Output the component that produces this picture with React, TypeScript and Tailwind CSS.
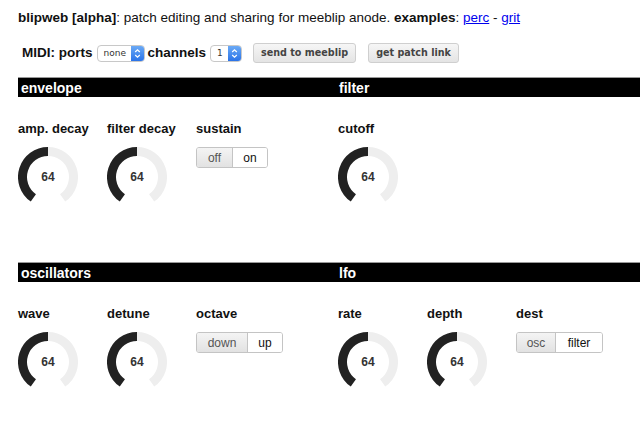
import React from "react";

function Knob({ value }: { value: number }) {
    return (
        <div className="relative w-[60px] h-[60px]">
            <svg width="60" height="60" viewBox="0 0 60 60" className="absolute inset-0">
                <path d="M30 4.5 A25.5 25.5 0 0 1 44.63 50.89" fill="none" stroke="#eeeeee" strokeWidth="9" />
                <path d="M15.37 50.89 A25.5 25.5 0 0 1 30 4.5" fill="none" stroke="#222222" strokeWidth="9" />
            </svg>
            <div className="absolute inset-0 flex items-center justify-center text-[12px] font-bold text-[#333]">
                {value}
            </div>
        </div>
    );
}

function Toggle({ options }: { options: { label: string; w: string; on?: boolean }[] }) {
    return (
        <div className="flex w-fit h-[21px] rounded-[3px] border border-[#c4c4c4] overflow-hidden text-[12px]">
            {options.map((o, i) => (
                <div
                    key={o.label}
                    className={`${o.w} flex items-center justify-center ${i > 0 ? "border-l border-[#c4c4c4]" : ""} ${
                        o.on ? "bg-white text-[#111]" : "bg-gradient-to-b from-[#f4f4f4] to-[#e2e2e2] text-[#555]"
                    }`}
                >
                    {o.label}
                </div>
            ))}
        </div>
    );
}

function Control({ label, children }: { label: string; children: React.ReactNode }) {
    return (
        <div className="w-[89px] flex flex-col items-start">
            <div className="font-bold text-[13px] leading-[15px] text-[#111]">{label}</div>
            <div className="mt-[11px]">{children}</div>
        </div>
    );
}

function Section({ title, pad, children }: { title: string; pad: string; children: React.ReactNode }) {
    return (
        <div className="h-[185px]">
            <div className={`h-[20px] bg-black text-white font-bold text-[14px] leading-[20px] border-t border-[#999] ${pad}`}>
                {title}
            </div>
            <div className="flex mt-[24px]">{children}</div>
        </div>
    );
}

function Select({ value, w }: { value: string; w: string }) {
    return (
        <div className={`${w} h-[17px] flex rounded-[4px] border border-[#c8c8c8] bg-white overflow-hidden`}>
            <div className="flex-1 text-[9px] leading-[15px] pl-[6px] text-[#333] font-['DejaVu_Sans']">{value}</div>
            <div className="w-[13px] bg-gradient-to-b from-[#6aa9f5] to-[#2a73e8] flex items-center justify-center">
                <svg width="7" height="11" viewBox="0 0 7 11">
                    <path d="M1.2 4 L3.5 1.8 L5.8 4 M1.2 7 L3.5 9.2 L5.8 7" fill="none" stroke="white" strokeWidth="1.2" />
                </svg>
            </div>
        </div>
    );
}

function Btn({ label }: { label: string }) {
    return (
        <div className="h-[20px] px-[7px] flex items-center rounded-[3px] border border-[#cfcfcf] bg-gradient-to-b from-[#f6f6f6] to-[#e4e4e4] text-[9.6px] font-bold text-[#444] font-['DejaVu_Sans']">
            {label}
        </div>
    );
}

export default function App() {
    return (
        <div className="w-[640px] h-[431px] overflow-hidden bg-white pl-[18px] pt-[10px] font-['Liberation_Sans',Arial,sans-serif] text-[#111]">
            <p className="text-[13.5px] leading-[16px]">
                <b>blipweb [alpha]</b>: patch editing and sharing for meeblip anode. <b>examples</b>:{" "}
                <a href="#" className="text-[#0000ee] underline">perc</a> -{" "}
                <a href="#" className="text-[#0000ee] underline">grit</a>
            </p>

            <div className="flex items-center mt-[17px] h-[20px] pl-[4px]">
                <span className="font-bold text-[13.5px] mr-[4px]">MIDI: ports</span>
                <Select value="none" w="w-[48px]" />
                <span className="font-bold text-[13.5px] ml-[3px] mr-[4px]">channels</span>
                <Select value="1" w="w-[32px]" />
                <div className="ml-[11px] flex gap-[12px]">
                    <Btn label="send to meeblip" />
                    <Btn label="get patch link" />
                </div>
            </div>

            <div className="flex mt-[14px]">
                <div className="w-[320px] shrink-0">
                    <Section title="envelope" pad="pl-[3px]">
                        <Control label="amp. decay"><Knob value={64} /></Control>
                        <Control label="filter decay"><Knob value={64} /></Control>
                        <Control label="sustain">
                            <Toggle options={[{ label: "off", w: "w-[35px]" }, { label: "on", w: "w-[35px]", on: true }]} />
                        </Control>
                    </Section>
                    <Section title="oscillators" pad="pl-[3px]">
                        <Control label="wave"><Knob value={64} /></Control>
                        <Control label="detune"><Knob value={64} /></Control>
                        <Control label="octave">
                            <Toggle options={[{ label: "down", w: "w-[50px]" }, { label: "up", w: "w-[35px]", on: true }]} />
                        </Control>
                    </Section>
                </div>
                <div className="flex-1">
                    <Section title="filter" pad="pl-[1px]">
                        <Control label="cutoff"><Knob value={64} /></Control>
                    </Section>
                    <Section title="lfo" pad="pl-[1px]">
                        <Control label="rate"><Knob value={64} /></Control>
                        <Control label="depth"><Knob value={64} /></Control>
                        <Control label="dest">
                            <Toggle options={[{ label: "osc", w: "w-[38px]" }, { label: "filter", w: "w-[47px]", on: true }]} />
                        </Control>
                    </Section>
                </div>
            </div>
        </div>
    );
}
